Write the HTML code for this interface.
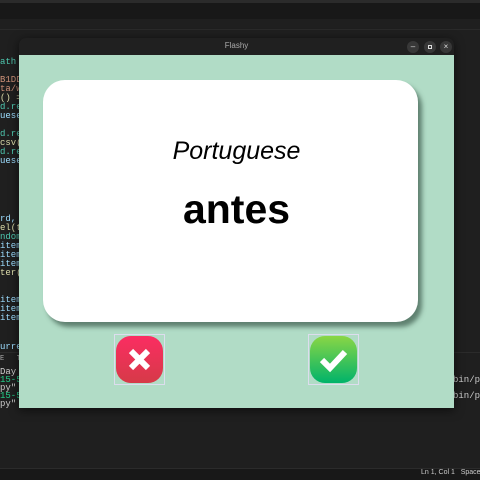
<!DOCTYPE html>
<html><head><meta charset="utf-8"><style>
*{margin:0;padding:0;box-sizing:border-box}
body{width:480px;height:480px;background:#1f1f1f;position:relative;overflow:hidden;font-family:"Liberation Sans",sans-serif}
.abs{position:absolute}
.code{font-family:"Liberation Mono",monospace;font-size:9px;line-height:9px;white-space:pre;color:#9cdcfe}
</style></head><body>
<div class="abs" style="left:0;top:0;width:480px;height:3px;background:#2b2b2b"></div>
<div class="abs" style="left:0;top:3px;width:480px;height:16px;background:#181818"></div>
<div class="abs" style="left:0;top:19px;width:480px;height:11px;background:#1f1f1f;border-bottom:1px solid #2a2a2a"></div>
<div class="abs" style="left:0;top:352px;width:480px;height:1px;background:#2b2b2b"></div>
<div class="abs" style="left:0;top:468px;width:480px;height:12px;background:#181818;border-top:1px solid #2b2b2b"></div>
<div class="abs" style="left:421px;top:469px;font-size:7px;color:#ccc;white-space:pre">Ln 1, Col 1   Spaces: 4</div>
<div class="abs code" style="left:0;top:58px;color:#4ec9b0">ath</div>
<div class="abs code" style="left:0;top:76px;color:#ce9178">B1DD</div>
<div class="abs code" style="left:0;top:85px;color:#ce9178">ta/w</div>
<div class="abs code" style="left:0;top:94px;color:#dcdcaa">() =</div>
<div class="abs code" style="left:0;top:103px;color:#4ec9b0">d.re</div>
<div class="abs code" style="left:0;top:112px">uese_</div>
<div class="abs code" style="left:0;top:130px;color:#4ec9b0">d.re</div>
<div class="abs code" style="left:0;top:139px;color:#dcdcaa">csv(</div>
<div class="abs code" style="left:0;top:148px;color:#4ec9b0">d.re</div>
<div class="abs code" style="left:0;top:157px">uese</div>
<div class="abs code" style="left:0;top:215px">rd, t</div>
<div class="abs code" style="left:0;top:224px;color:#dcdcaa">el(ti</div>
<div class="abs code" style="left:0;top:233px;color:#4ec9b0">ndom.</div>
<div class="abs code" style="left:0;top:242px">itemc</div>
<div class="abs code" style="left:0;top:251px">itemc</div>
<div class="abs code" style="left:0;top:260px">itemc</div>
<div class="abs code" style="left:0;top:269px;color:#dcdcaa">ter(3</div>
<div class="abs code" style="left:0;top:296px">itemc</div>
<div class="abs code" style="left:0;top:305px">itemc</div>
<div class="abs code" style="left:0;top:314px">itemc</div>
<div class="abs code" style="left:0;top:343px">urren</div>
<div class="abs code" style="left:0;top:355px;color:#aaa;font-size:7px">E   T</div>
<div class="abs code" style="left:0;top:368px;color:#ccc">Day 3</div>
<div class="abs code" style="left:0;top:376px;color:#23d18b">15-57</div>
<div class="abs code" style="left:0;top:384px;color:#ccc">py"</div>
<div class="abs code" style="left:0;top:392px;color:#23d18b">15-57</div>
<div class="abs code" style="left:0;top:400px;color:#ccc">py"</div>
<div class="abs code" style="left:453px;top:376px;color:#ccc">bin/pyt</div>
<div class="abs code" style="left:453px;top:392px;color:#ccc">bin/pyt</div>
<!-- window -->
<div class="abs" style="left:19px;top:38px;width:435px;height:370px;background:#202020;border-radius:7px 7px 0 0;box-shadow:0 2px 10px rgba(0,0,0,.6)"></div>
<div class="abs" style="left:19px;top:41px;width:435px;text-align:center;font-size:8px;color:#aaa">Flashy</div>
<div class="abs" style="left:407px;top:41px;width:12px;height:12px;border-radius:6px;background:#383838;color:#ddd;font-size:8px;text-align:center;line-height:11px">–</div>
<div class="abs" style="left:424px;top:41px;width:12px;height:12px;border-radius:6px;background:#383838"><div style="position:absolute;left:4px;top:4px;width:4px;height:4px;border:1px solid #ddd"></div></div>
<div class="abs" style="left:440px;top:41px;width:12px;height:12px;border-radius:6px;background:#383838;color:#ddd;font-size:8px;text-align:center;line-height:12px">×</div>
<div class="abs" style="left:19px;top:55px;width:435px;height:353px;background:#b1dcc6"></div>
<div class="abs" style="left:43px;top:80px;width:375px;height:242px;background:#fff;border-radius:22px;box-shadow:4px 5px 5px rgba(60,90,75,.7)"></div>
<div class="abs" style="left:49px;top:137px;width:375px;text-align:center;font-style:italic;font-size:25px;color:#000">Portuguese</div>
<div class="abs" style="left:49px;top:186px;width:375px;text-align:center;font-weight:bold;font-size:41px;color:#000">antes</div>
<!-- buttons -->
<div class="abs" style="left:114px;top:334px;width:51px;height:51px;border:1px solid #dde;background:#b1dcc6"></div>
<div class="abs" style="left:116px;top:336px;width:47px;height:47px;border-radius:15px;background:linear-gradient(#fb2d62,#d63a48)"></div>
<svg class="abs" style="left:116px;top:336px" width="47" height="47"><path d="M15 15L32 32M32 15L15 32" stroke="#fff" stroke-width="6"/></svg>
<div class="abs" style="left:308px;top:334px;width:51px;height:51px;border:1px solid #dde;background:#b1dcc6"></div>
<div class="abs" style="left:310px;top:336px;width:47px;height:47px;border-radius:15px;background:linear-gradient(#8ad645,#00b36a)"></div>
<svg class="abs" style="left:310px;top:336px" width="47" height="47"><path d="M12 24L20 32L35 16" stroke="#fff" stroke-width="6" fill="none"/></svg>
</body></html>
